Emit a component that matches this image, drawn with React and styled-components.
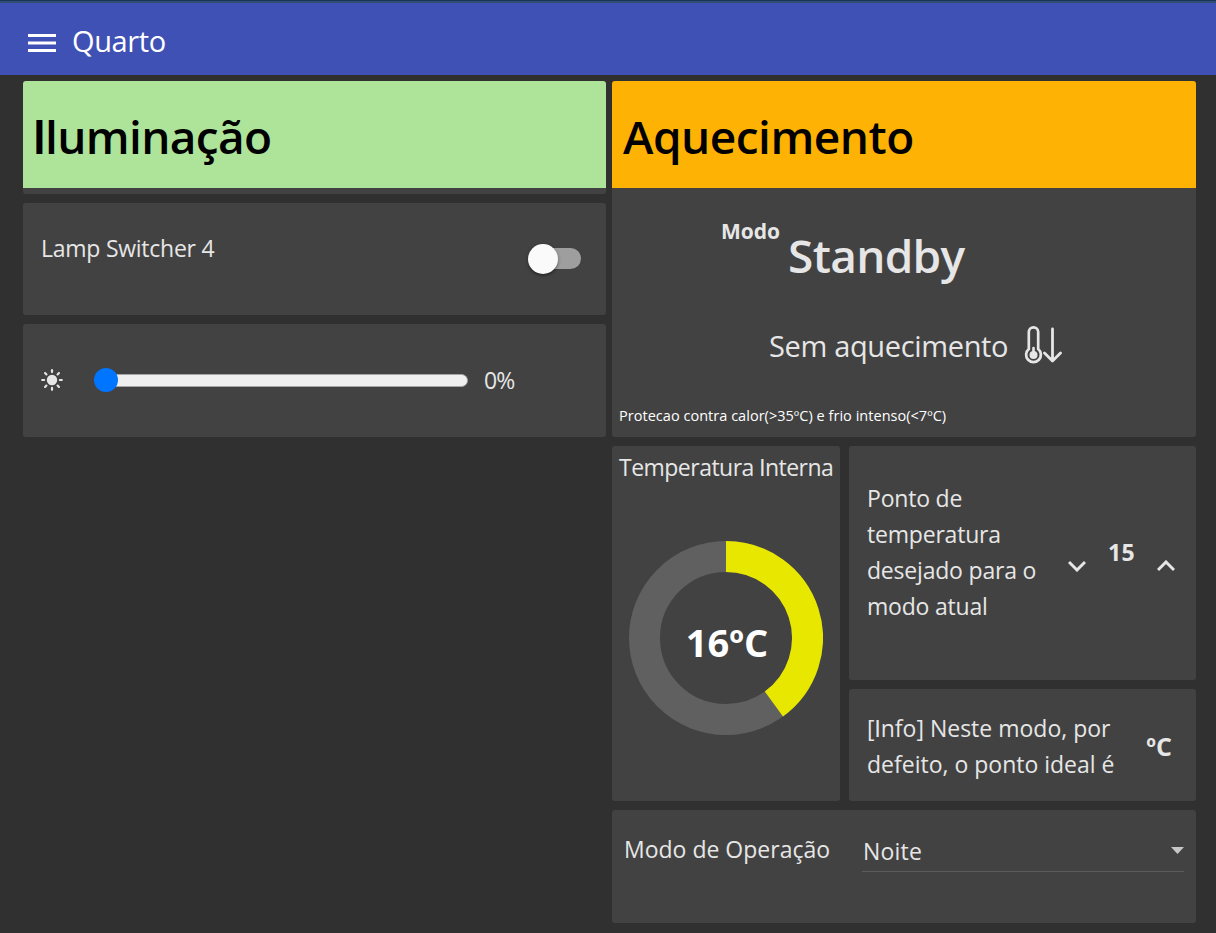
import React from "react";
import styled, { createGlobalStyle } from "styled-components";

const Global = createGlobalStyle`
  * { box-sizing: border-box; }
  body { margin: 0; background: #303030; color: #e6e6e6; font-family: "Open Sans", "Noto Sans", sans-serif; }
`;

const Page = styled.div`
  width: 1216px;
  height: 933px;
  background: #303030;
  overflow: hidden;
`;

const Header = styled.header`
  height: 75px;
  display: flex;
  align-items: flex-start;
  gap: 16px;
  padding: 21px 28px 0;
  color: #fff;
  background: linear-gradient(#1a3454 0 1px, #2f4f74 1px 3px, #3f51b5 3px);
`;

const MenuIcon = styled.svg`
  width: 28px;
  height: 18px;
  margin-top: 13px;
`;

const Columns = styled.main`
  display: grid;
  grid-template-columns: 583px 584px;
  column-gap: 6px;
  padding: 6px 0 0 23px;
  align-items: start;
`;

const Column = styled.section`
  display: flex;
  flex-direction: column;
  gap: 9px;
`;

const Card = styled.div`
  height: ${(p) => p.$h}px;
  background: #424242;
  border-radius: 3px;
  overflow: hidden;
`;

const Row = styled(Card)`
  display: flex;
  align-items: flex-start;
  padding: ${(p) => p.$pad};
`;

const Banner = styled.div`
  height: 107px;
  padding: 21px 0 0 ${(p) => p.$left}px;
  background: ${(p) => p.$color};
  color: #000;
`;

const Text = styled.span`
  display: block;
  flex: none;
  white-space: pre;
  font-size: ${(p) => p.$size || 23}px;
  font-weight: ${(p) => p.$weight || 400};
  letter-spacing: ${(p) => p.$ls || 0}px;
  line-height: ${(p) => p.$lh || 36}px;
  color: ${(p) => p.$color || "inherit"};
`;

/* Capital I without serifs */
const PlainI = styled.span`
  font-family: Inter, sans-serif;
  line-height: 1;
`;

const Switch = styled.div`
  margin: 41px 0 0 auto;
  width: 53px;
  height: 30px;
  padding: 4px 0 5px 8px;
  position: relative;
  &::before {
    content: "";
    display: block;
    height: 21px;
    border-radius: 11px;
    background: #9e9e9e;
  }
  &::after {
    content: "";
    position: absolute;
    left: 0;
    top: 0;
    width: 30px;
    height: 30px;
    border-radius: 50%;
    background: #fafafa;
    box-shadow: 0 2px 2px rgba(0, 0, 0, 0.25), 0 1px 4px rgba(0, 0, 0, 0.2);
  }
`;

const Slider = styled.div`
  position: relative;
  width: 373px;
  height: 13px;
  margin: 50px 16px 0 32px;
  border: 1px solid #a5a5a5;
  border-radius: 7px;
  background: #efefef;
  &::before {
    content: "";
    position: absolute;
    left: -2px;
    top: -7px;
    width: 24px;
    height: 24px;
    border-radius: 50%;
    background: #0075ff;
  }
`;

const SunIcon = styled.svg`
  width: 22px;
  height: 22px;
  margin-top: 45px;
`;

const ModeLine = styled.div`
  display: flex;
  align-items: flex-start;
  gap: 8px;
  height: 103px;
  padding: 25px 0 0 109px;
`;

const StateLine = styled.div`
  display: flex;
  align-items: center;
  gap: 16px;
  height: 50px;
  margin-top: 30px;
  padding-left: 157px;
`;

const ThermometerIcon = styled.svg`
  width: 38px;
  height: 40px;
  margin-top: -2px;
`;

const Note = styled.div`
  padding: 33px 0 0 7px;
`;

const Grid = styled.div`
  display: grid;
  grid-template-columns: 228px 347px;
  gap: 9px;
`;

const GaugeCard = styled(Card)`
  padding: 3px 0 0 7px;
`;

const Gauge = styled.div`
  display: grid;
  place-items: center;
  width: 194px;
  height: 194px;
  margin: 56px 0 0 10px;
  > * { grid-area: 1 / 1; }
`;

const GaugeValue = styled(Text)`
  padding: 8px 0 0 2px;
`;

const Stack = styled.div`
  display: flex;
  flex-direction: column;
  gap: 9px;
`;

const Stepper = styled.div`
  display: flex;
  align-items: flex-start;
  margin-left: auto;
  gap: 22px;
`;

const Chevron = styled.svg`
  width: 18px;
  height: 12px;
  margin-top: 80px;
`;

const Select = styled.div`
  display: flex;
  justify-content: space-between;
  width: 322px;
  height: 39px;
  margin: 23px 0 0 auto;
  padding-left: 1px;
  border-bottom: 1px solid #5b5b5b;
`;

const Arrow = styled.svg`
  width: 13px;
  height: 7px;
  margin-top: 14px;
`;

export default function App() {
  return (
    <Page>
      <Global />
      <Header>
        <MenuIcon viewBox="0 0 28 18">
          <path d="M0 0h28v3H0zM0 7.5h28v3H0zM0 15h28v3H0z" fill="#fff" />
        </MenuIcon>
        <Text $size={29} $ls={-0.4} $lh={40}>Quarto</Text>
      </Header>
      <Columns>
        <Column>
          <Card $h={113}>
            <Banner $color="#aee39a" $left={10}>
              <Text $size={46} $weight={600} $ls={-0.65} $lh={68}><PlainI>I</PlainI>luminação</Text>
            </Banner>
          </Card>
          <Row $h={112} $pad="0 25px 0 18px">
            <Text $ls={-0.25} $lh={90}>Lamp Switcher 4</Text>
            <Switch />
          </Row>
          <Row $h={113} $pad="0 0 0 18px">
            <SunIcon viewBox="-11 -11 22 22">
              <circle r="5.2" fill="#e6e6e6" />
              <g stroke="#e6e6e6" strokeWidth="2.2" strokeLinecap="round">
                {[0, 45, 90, 135, 180, 225, 270, 315].map((a) => (
                  <path key={a} d="M7.9 0H9.8" transform={`rotate(${a})`} />
                ))}
              </g>
            </SunIcon>
            <Slider />
            <Text $ls={-0.8} $lh={112}>0%</Text>
          </Row>
        </Column>
        <Column>
          <Card $h={356}>
            <Banner $color="#fdb204" $left={11}>
              <Text $size={46} $weight={600} $ls={-0.5} $lh={68}>Aquecimento</Text>
            </Banner>
            <ModeLine>
              <Text $size={21} $weight={700}>Modo</Text>
              <Text $size={46} $weight={600} $ls={-0.7} $lh={84}>Standby</Text>
            </ModeLine>
            <StateLine>
              <Text $size={29} $ls={-0.35}>Sem aquecimento</Text>
              <ThermometerIcon viewBox="0 0 38 40" fill="none" stroke="#e6e6e6">
                <path d="M4.8 24V7a4.7 4.7 0 0 1 9.4 0v17a7.4 7.4 0 1 1-9.4 0z" strokeWidth="2.7" />
                <path d="M9.5 23v7" strokeWidth="2.6" strokeLinecap="round" />
                <circle cx="9.5" cy="30" r="4" fill="#e6e6e6" stroke="none" />
                <path d="M28.5 4v31.5M20.5 28l8 8 8-8" strokeWidth="2.8" strokeLinecap="round" strokeLinejoin="round" />
              </ThermometerIcon>
            </StateLine>
            <Note><Text $size={14.5} $ls={0.03} $lh={24} $color="#fff">Protecao contra calor(&gt;35ºC) e frio intenso(&lt;7ºC)</Text></Note>
          </Card>
          <Grid>
            <GaugeCard $h={355}>
              <Text $ls={-0.52}>Temperatura <PlainI>I</PlainI>nterna</Text>
              <Gauge>
                <svg width="194" height="194" viewBox="-97 -97 194 194" fill="none" strokeWidth="31">
                  <circle r="81.5" stroke="#606060" />
                  <path d="M0 -81.5A81.5 81.5 0 0 1 47.9 65.93" stroke="#e7e700" />
                </svg>
                <GaugeValue $size={38} $weight={700} $color="#fff">16ºC</GaugeValue>
              </Gauge>
            </GaugeCard>
            <Stack>
              <Row $h={234} $pad="34px 21px 0 18px">
                <Text $ls={-0.2}>{"Ponto de\ntemperatura\ndesejado para o\nmodo atual"}</Text>
                <Stepper>
                  <Chevron viewBox="0 0 18 12" fill="none" stroke="#e6e6e6" strokeWidth="3"><path d="M1 2l8 8 8-8" /></Chevron>
                  <Text $weight={700} $ls={0.3} $lh={144}>15</Text>
                  <Chevron viewBox="0 0 18 12" fill="none" stroke="#e6e6e6" strokeWidth="3"><path d="M1 10l8-8 8 8" /></Chevron>
                </Stepper>
              </Row>
              <Row $h={112} $pad="21px 24px 0 18px">
                <Text>[<PlainI>I</PlainI>nfo] Neste modo, por{"\n"}defeito, o ponto ideal é</Text>
                <Stepper><Text $size={25} $weight={700} $lh={72}>ºC</Text></Stepper>
              </Row>
            </Stack>
          </Grid>
          <Row $h={113} $pad="0 12px 0 12px">
            <Text $lh={78}>Modo de Operação</Text>
            <Select>
              <Text $ls={0.2}>Noite</Text>
              <Arrow viewBox="0 0 13 7"><path d="M0 0h13L6.5 7z" fill="#c6c6c6" /></Arrow>
            </Select>
          </Row>
        </Column>
      </Columns>
    </Page>
  );
}
